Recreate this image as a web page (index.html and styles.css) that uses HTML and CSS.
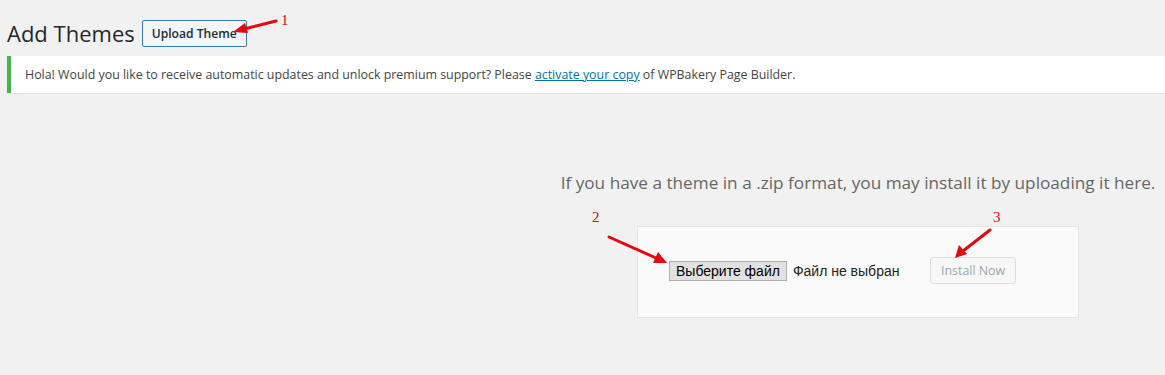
FILE: index.html
```html
<!DOCTYPE html>
<html lang="en">
<head>
  <meta charset="UTF-8">
  <title>Add Themes</title>
  <link rel="stylesheet" href="styles.css">
</head>
<body>
  <div class="wrap">
    <div class="title-row">
      <h1>Add Themes</h1>
      <button class="title-action">Upload Theme</button>
    </div>
    <div class="notice">
      Hola! Would you like to receive automatic updates and unlock premium support? Please <a href="#">activate your copy</a> of WPBakery Page Builder.
    </div>
    <div class="upload-theme">
      <p class="install-help">If you have a theme in a .zip format, you may install it by uploading it here.</p>
      <form class="upload-form">
        <div class="file-input">
          <span class="file-button">Выберите файл</span>
          <span class="file-name">Файл не выбран</span>
        </div>
        <button type="button" class="install-button" disabled>Install Now</button>
      </form>
    </div>
  </div>

  <!-- red annotation arrows drawn over the screenshot -->
  <svg class="annotations" width="1165" height="375" viewBox="0 0 1165 375">
    <g stroke="#e5060e" stroke-width="3" stroke-linecap="round" fill="#e5060e">
      <line x1="276" y1="21" x2="244" y2="29" />
      <polygon points="233,32 245,23 248,33" stroke="none" />
      <line x1="609" y1="237" x2="656" y2="258" />
      <polygon points="667,263 653,263 658,252" stroke="none" />
      <line x1="990" y1="230" x2="963" y2="251" />
      <polygon points="955,258 959,245 967,254" stroke="none" />
    </g>
    <g class="labels" fill="#e5060e">
      <text x="281" y="25">1</text>
      <text x="592" y="222">2</text>
      <text x="993" y="222">3</text>
    </g>
  </svg>
</body>
</html>
```

FILE: styles.css
```css
body {
  margin: 0;
  background: #f1f1f1;
  color: #444;
  font-family: "Open Sans", sans-serif;
  font-size: 12.4px;
}
.wrap {
  padding-left: 7px;
}
.title-row {
  display: flex;
  align-items: center;
  padding-top: 18px;
  height: 30px;
}
.title-row h1 {
  margin: 0;
  font-size: 22px;
  font-weight: 400;
  color: #23282d;
  line-height: 30px;
}
.title-action {
  margin-left: 7px;
  height: 27px;
  padding: 0 9px;
  background: #f3f5f6;
  border: 1px solid #2f7fb0;
  border-radius: 2px;
  color: #1b2c3c;
  font-family: "Open Sans", sans-serif;
  font-size: 12.1px;
  font-weight: 600;
}
.notice {
  margin-top: 8px;
  background: #fff;
  border-left: 4px solid #46b450;
  box-shadow: 0 1px 1px rgba(0, 0, 0, 0.06);
  padding: 9px 14px;
  line-height: 19px;
  color: #444;
}
.notice a {
  color: #0073aa;
}
.upload-theme {
  width: 614px;
  margin-left: auto;
  text-align: center;
}
.install-help {
  margin: 78px 0 0;
  font-size: 17.2px;
  line-height: 24px;
  color: #666;
}
.upload-form {
  display: flex;
  align-items: center;
  width: 409px;
  margin: 31px 0 0 86px;
  padding: 30px 0 33px 31px;
  background: #fafafa;
  border: 1px solid #e5e5e5;
}
.file-input {
  display: flex;
  align-items: center;
  width: 261px;
  font-family: "Liberation Sans", Arial, sans-serif;
  font-size: 14px;
  color: #222;
}
.file-button {
  padding: 1px 6px 0;
  background: #e1e1e1;
  border: 1px solid #adadad;
  color: #000;
  line-height: 17px;
}
.file-name {
  margin-left: 6px;
}
.install-button {
  height: 27px;
  padding: 0 10px;
  background: #f7f7f7;
  border: 1px solid #ddd;
  border-radius: 3px;
  color: #a0a5aa;
  font-family: "Open Sans", sans-serif;
  font-size: 12.4px;
}
.annotations {
  position: absolute;
  top: 0;
  left: 0;
  pointer-events: none;
}
.labels text {
  font-family: "Liberation Serif", serif;
  font-size: 15px;
}
```
